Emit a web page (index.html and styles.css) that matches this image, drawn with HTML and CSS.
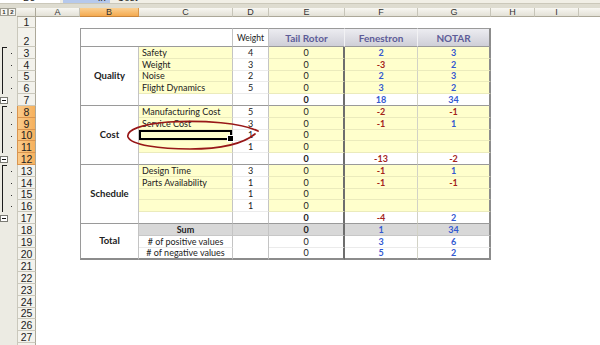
FILE: index.html
```html
<!DOCTYPE html>
<html>
<head>
<meta charset="utf-8">
<title>Sheet</title>
<link rel="stylesheet" href="styles.css">
</head>
<body>
<div class="app">
  <div class="fbar"><div class="fbar-in"><span class="namebox">B8</span><span class="fxbox">fx</span><span class="ftext">Cost</span></div></div>
  <div class="tband"></div>
  <table class="sheet">
    <colgroup><col class="c-ol"><col class="c-rh"><col class="c-a"><col class="c-b"><col class="c-c"><col class="c-d"><col class="c-e"><col class="c-f"><col class="c-g"><col class="c-h"><col class="c-i"><col class="c-j"></colgroup>
    <thead>
      <tr class="h9"><th class="olh"><span class="lvl">1</span><span class="lvl">2</span></th><th class="corner"></th><th class="ch">A</th><th class="ch on">B</th><th class="ch">C</th><th class="ch">D</th><th class="ch">E</th><th class="ch">F</th><th class="ch">G</th><th class="ch">H</th><th class="ch">I</th><th class="ch"></th></tr>
    </thead>
    <tbody>
      <tr class="h11"><td class="ol"></td><td class="rh">1</td><td></td><td></td><td></td><td></td><td></td><td></td><td></td><td></td><td></td><td></td></tr>
      <tr class="h19"><td class="ol"></td><td class="rh">2</td><td></td><td class="hb" colspan="2"></td><td class="hw">Weight</td><td class="hx">Tail Rotor</td><td class="hx">Fenestron</td><td class="hx last">NOTAR</td><td></td><td></td><td></td></tr>

      <tr class="h12"><td class="ol g top"></td><td class="rh">3</td><td></td><td class="tb sep" rowspan="5">Quality</td><td class="x c y">Safety</td><td class="x d">4</td><td class="x e y">0</td><td class="x f y pos">2</td><td class="x gg y pos">3</td><td></td><td></td><td></td></tr>
      <tr class="h12"><td class="ol g"></td><td class="rh">4</td><td></td><td class="x c y">Weight</td><td class="x d">3</td><td class="x e y">0</td><td class="x f y neg">-3</td><td class="x gg y pos">2</td><td></td><td></td><td></td></tr>
      <tr class="h11"><td class="ol g"></td><td class="rh">5</td><td></td><td class="x c y">Noise</td><td class="x d">2</td><td class="x e y">0</td><td class="x f y pos">2</td><td class="x gg y pos">3</td><td></td><td></td><td></td></tr>
      <tr class="h12"><td class="ol g"></td><td class="rh">6</td><td></td><td class="x c y">Flight Dynamics</td><td class="x d">5</td><td class="x e y">0</td><td class="x f y pos">3</td><td class="x gg y pos">2</td><td></td><td></td><td></td></tr>
      <tr class="h12"><td class="ol"><span class="minus"></span></td><td class="rh">7</td><td></td><td class="x c sep"></td><td class="x d sep"></td><td class="x e sep b">0</td><td class="x f sep pos">18</td><td class="x gg sep pos">34</td><td></td><td></td><td></td></tr>

      <tr class="h12"><td class="ol g top"></td><td class="rh on">8</td><td></td><td class="tb sep" rowspan="5">Cost</td><td class="x c y">Manufacturing Cost</td><td class="x d">5</td><td class="x e y">0</td><td class="x f y neg">-2</td><td class="x gg y neg">-1</td><td></td><td></td><td></td></tr>
      <tr class="h12"><td class="ol g"></td><td class="rh on">9</td><td></td><td class="x c y">Service Cost</td><td class="x d">3</td><td class="x e y">0</td><td class="x f y neg">-1</td><td class="x gg y pos">1</td><td></td><td></td><td></td></tr>
      <tr class="h11"><td class="ol g"></td><td class="rh on">10</td><td></td><td class="x c y sel"></td><td class="x d">1</td><td class="x e y">0</td><td class="x f y"></td><td class="x gg y"></td><td></td><td></td><td></td></tr>
      <tr class="h12"><td class="ol g"></td><td class="rh on">11</td><td></td><td class="x c y"></td><td class="x d">1</td><td class="x e y">0</td><td class="x f y"></td><td class="x gg y"></td><td></td><td></td><td></td></tr>
      <tr class="h12"><td class="ol"><span class="minus"></span></td><td class="rh on">12</td><td></td><td class="x c sep"></td><td class="x d sep"></td><td class="x e sep b">0</td><td class="x f sep neg">-13</td><td class="x gg sep neg">-2</td><td></td><td></td><td></td></tr>

      <tr class="h12"><td class="ol g top"></td><td class="rh">13</td><td></td><td class="tb sep" rowspan="5">Schedule</td><td class="x c y">Design Time</td><td class="x d">3</td><td class="x e y">0</td><td class="x f y neg">-1</td><td class="x gg y pos">1</td><td></td><td></td><td></td></tr>
      <tr class="h12"><td class="ol g"></td><td class="rh">14</td><td></td><td class="x c y">Parts Availability</td><td class="x d">1</td><td class="x e y">0</td><td class="x f y neg">-1</td><td class="x gg y neg">-1</td><td></td><td></td><td></td></tr>
      <tr class="h11"><td class="ol g"></td><td class="rh">15</td><td></td><td class="x c y"></td><td class="x d">1</td><td class="x e y">0</td><td class="x f y"></td><td class="x gg y"></td><td></td><td></td><td></td></tr>
      <tr class="h12"><td class="ol g"></td><td class="rh">16</td><td></td><td class="x c y"></td><td class="x d">1</td><td class="x e y">0</td><td class="x f y"></td><td class="x gg y"></td><td></td><td></td><td></td></tr>
      <tr class="h12"><td class="ol"><span class="minus"></span></td><td class="rh">17</td><td></td><td class="x c sep"></td><td class="x d sep"></td><td class="x e sep b">0</td><td class="x f sep neg">-4</td><td class="x gg sep pos">2</td><td></td><td></td><td></td></tr>

      <tr class="h12"><td class="ol"></td><td class="rh">18</td><td></td><td class="tb bot" rowspan="3">Total</td><td class="x c cc gr b">Sum</td><td class="x d gr"></td><td class="x e gr b">0</td><td class="x f gr pos">1</td><td class="x gg gr pos">34</td><td></td><td></td><td></td></tr>
      <tr class="h12"><td class="ol"></td><td class="rh">19</td><td></td><td class="x c cc">&#35; of positive values</td><td class="x d bot" rowspan="2"></td><td class="x e">0</td><td class="x f pos">3</td><td class="x gg pos">6</td><td></td><td></td><td></td></tr>
      <tr class="h11"><td class="ol"></td><td class="rh">20</td><td></td><td class="x c cc bot">&#35; of negative values</td><td class="x e bot">0</td><td class="x f bot pos">5</td><td class="x gg bot pos">2</td><td></td><td></td><td></td></tr>

      <tr class="h12"><td class="ol"></td><td class="rh">21</td><td></td><td></td><td></td><td></td><td></td><td></td><td></td><td></td><td></td><td></td></tr>
      <tr class="h12"><td class="ol"></td><td class="rh">22</td><td></td><td></td><td></td><td></td><td></td><td></td><td></td><td></td><td></td><td></td></tr>
      <tr class="h12"><td class="ol"></td><td class="rh">23</td><td></td><td></td><td></td><td></td><td></td><td></td><td></td><td></td><td></td><td></td></tr>
      <tr class="h12"><td class="ol"></td><td class="rh">24</td><td></td><td></td><td></td><td></td><td></td><td></td><td></td><td></td><td></td><td></td></tr>
      <tr class="h11"><td class="ol"></td><td class="rh">25</td><td></td><td></td><td></td><td></td><td></td><td></td><td></td><td></td><td></td><td></td></tr>
      <tr class="h12"><td class="ol"></td><td class="rh">26</td><td></td><td></td><td></td><td></td><td></td><td></td><td></td><td></td><td></td><td></td></tr>
      <tr class="h12"><td class="ol"></td><td class="rh">27</td><td></td><td></td><td></td><td></td><td></td><td></td><td></td><td></td><td></td><td></td></tr>
      <tr class="h12"><td class="ol"></td><td class="rh">28</td><td></td><td></td><td></td><td></td><td></td><td></td><td></td><td></td><td></td><td></td></tr>
    </tbody>
  </table>
  <svg class="ring" width="600" height="345" viewBox="0 0 600 345" aria-hidden="true">
    <path d="M258 131 C242 123 205 120 168 122 C142 124 126 130 128 137 C131 145 160 149 190 149 C222 149 244 143 255 134" fill="none" stroke="#981818" stroke-width="1.7" stroke-linecap="round"/>
  </svg>
</div>
</body>
</html>
```
FILE: styles.css
```css
* { box-sizing: border-box; }
html, body { margin: 0; padding: 0; }
body {
  width: 600px;
  height: 345px;
  overflow: hidden;
  background: #fff;
  font-family: "Liberation Sans", Arial, sans-serif;
}
.app { position: relative; width: 600px; height: 345px; overflow: hidden; }

/* clipped formula bar */
.fbar { height: 3px; overflow: hidden; background: #f1efe6; }
.fbar-in {
  display: flex;
  align-items: flex-end;
  height: 12px;
  margin-top: -9px;
  font-size: 10px;
  line-height: 11px;
  color: #222;
}
.namebox { width: 60px; padding-left: 23px; background: #fff; }
.fxbox { width: 47px; margin-left: 3px; padding-right: 4px; background: #b6c9ec; text-align: right; font-style: italic; }
.ftext { padding-left: 7px; }
.tband { height: 5px; background: #dedcd0; border-top: 1px solid #cbc8ba; }

/* sheet grid */
.sheet { table-layout: fixed; width: 639px; border-collapse: separate; border-spacing: 0; }
.c-ol { width: 17px; } .c-rh { width: 19px; } .c-a { width: 44px; } .c-b { width: 59px; }
.c-c { width: 94px; } .c-d { width: 36px; } .c-e { width: 76px; } .c-f { width: 73px; }
.c-g { width: 73px; } .c-h { width: 44px; } .c-i { width: 44px; } .c-j { width: 60px; }
.sheet td, .sheet th { padding: 0; overflow: hidden; white-space: nowrap; }
.h9 { height: 9px; } .h11 { height: 11px; } .h12 { height: 12px; } .h19 { height: 19px; }

/* column headers */
.ch {
  font-size: 9px;
  font-weight: normal;
  line-height: 8px;
  color: #333;
  text-align: center;
  background: linear-gradient(#f8f7f2, #e3e1d6);
  border-right: 1px solid #c7c5b9;
  border-bottom: 1px solid #aca899;
}
.ch.on { background: linear-gradient(#fbd092, #f4aa50); border-right-color: #d8964a; border-bottom-color: #c9863c; }
.corner { background: linear-gradient(#f8f7f2, #e3e1d6); border-right: 1px solid #aca899; border-bottom: 1px solid #aca899; }
.olh { background: #ecebe3; text-align: left; vertical-align: top; padding-left: 1px; line-height: 0; }
.lvl {
  display: inline-block;
  width: 8px;
  height: 8px;
  margin-right: 0;
  border: 1px solid #a3a196;
  background: #f7f6f1;
  font-size: 6px;
  line-height: 6px;
  font-weight: bold;
  color: #333;
  text-align: center;
}

/* outline + row headers */
.ol { background: #ecebe3; vertical-align: middle; }
.ol.g {
  background:
    linear-gradient(#1c1c1c, #1c1c1c) 2px 0 / 1px 100% no-repeat,
    linear-gradient(#333, #333) 11px 55% / 1px 1px no-repeat,
    #ecebe3;
}
.ol.g.top {
  background:
    linear-gradient(#1c1c1c, #1c1c1c) 2px 0 / 5px 1px no-repeat,
    linear-gradient(#1c1c1c, #1c1c1c) 2px 0 / 1px 100% no-repeat,
    linear-gradient(#333, #333) 11px 55% / 1px 1px no-repeat,
    #ecebe3;
}
.minus {
  display: block;
  width: 8px;
  height: 7px;
  border: 1px solid #7b7b74;
  background: linear-gradient(#111, #111) center / 4px 1px no-repeat, #fff;
}
.rh {
  font-size: 10.5px;
  line-height: 10px;
  color: #222;
  text-align: center;
  vertical-align: bottom;
  background: #f3f2ec;
  border-left: 1px solid #cac8bc;
  border-right: 1px solid #aca899;
  border-bottom: 1px solid #cac8bc;
}
.rh.on { background: linear-gradient(90deg, #fbcb8a, #f6b05c); border-bottom-color: #d99550; border-left-color: #d99550; }

/* data block */
.hb { border-left: 1px solid #9a9a9a; border-top: 1px solid #9a9a9a; border-bottom: 1px solid #9a9a9a; border-right: 1px solid #c4c4c4; }
.hw {
  font: 8.5px/10px Lato, "Liberation Sans", sans-serif;
  color: #222;
  text-align: center;
  vertical-align: middle;
  border-top: 1px solid #9a9a9a;
  border-bottom: 1px solid #9a9a9a;
  border-right: 1px solid #c4c4c4;
}
.hx {
  font: bold 10px/12px Lato, "Liberation Sans", sans-serif;
  color: #5d5c98;
  text-align: center;
  vertical-align: middle;
  background: linear-gradient(#ececf1, #cfcfd7);
  border-top: 1px solid #9a9a9a;
  border-bottom: 1px solid #9a9a9a;
  border-right: 1px solid #f2f2f4;
}
.hx.last { border-right: 2px solid #8c8c8c; }

.tb {
  font: bold 9.5px/10px Lato, "Liberation Sans", sans-serif;
  color: #222;
  text-align: center;
  vertical-align: middle;
  border-left: 1px solid #9a9a9a;
  border-right: 1px solid #c4c4c4;
  border-bottom: 1px solid #9a9a9a;
}
.x {
  font: 9px/10px Lato, "Liberation Sans", sans-serif;
  color: #222;
  vertical-align: middle;
  border-bottom: 1px solid rgba(0, 0, 0, 0.08);
}
.c { padding-left: 3px !important; border-right: 1px solid #c4c4c4; }
.cc { text-align: center; padding-left: 0 !important; }
.d { text-align: center; border-right: 1px solid #c4c4c4; }
.e { text-align: center; border-right: 2px solid #6e6e6e; }
.f { text-align: center; border-right: 1px solid #d2d2c6; }
.gg { text-align: center; border-right: 2px solid #8c8c8c; }
.y { background: #ffffcc; }
.gr { background: #d8d8d8; }
.sep { border-bottom: 1px solid #9a9a9a; }
.bot { border-bottom: 2px solid #8c8c8c; }
.b { font-weight: bold; }
.pos { color: #3358d0; font-weight: bold; }
.neg { color: #a3231a; font-weight: bold; }

.sheet td.sel { position: relative; overflow: visible; box-shadow: inset 0 0 0 2px #000; }
.sel::after {
  content: "";
  position: absolute;
  right: -2px;
  bottom: -2px;
  width: 5px;
  height: 5px;
  background: #000;
  border: 1px solid #fff;
}

.ring { position: absolute; left: 0; top: 0; pointer-events: none; }
```
